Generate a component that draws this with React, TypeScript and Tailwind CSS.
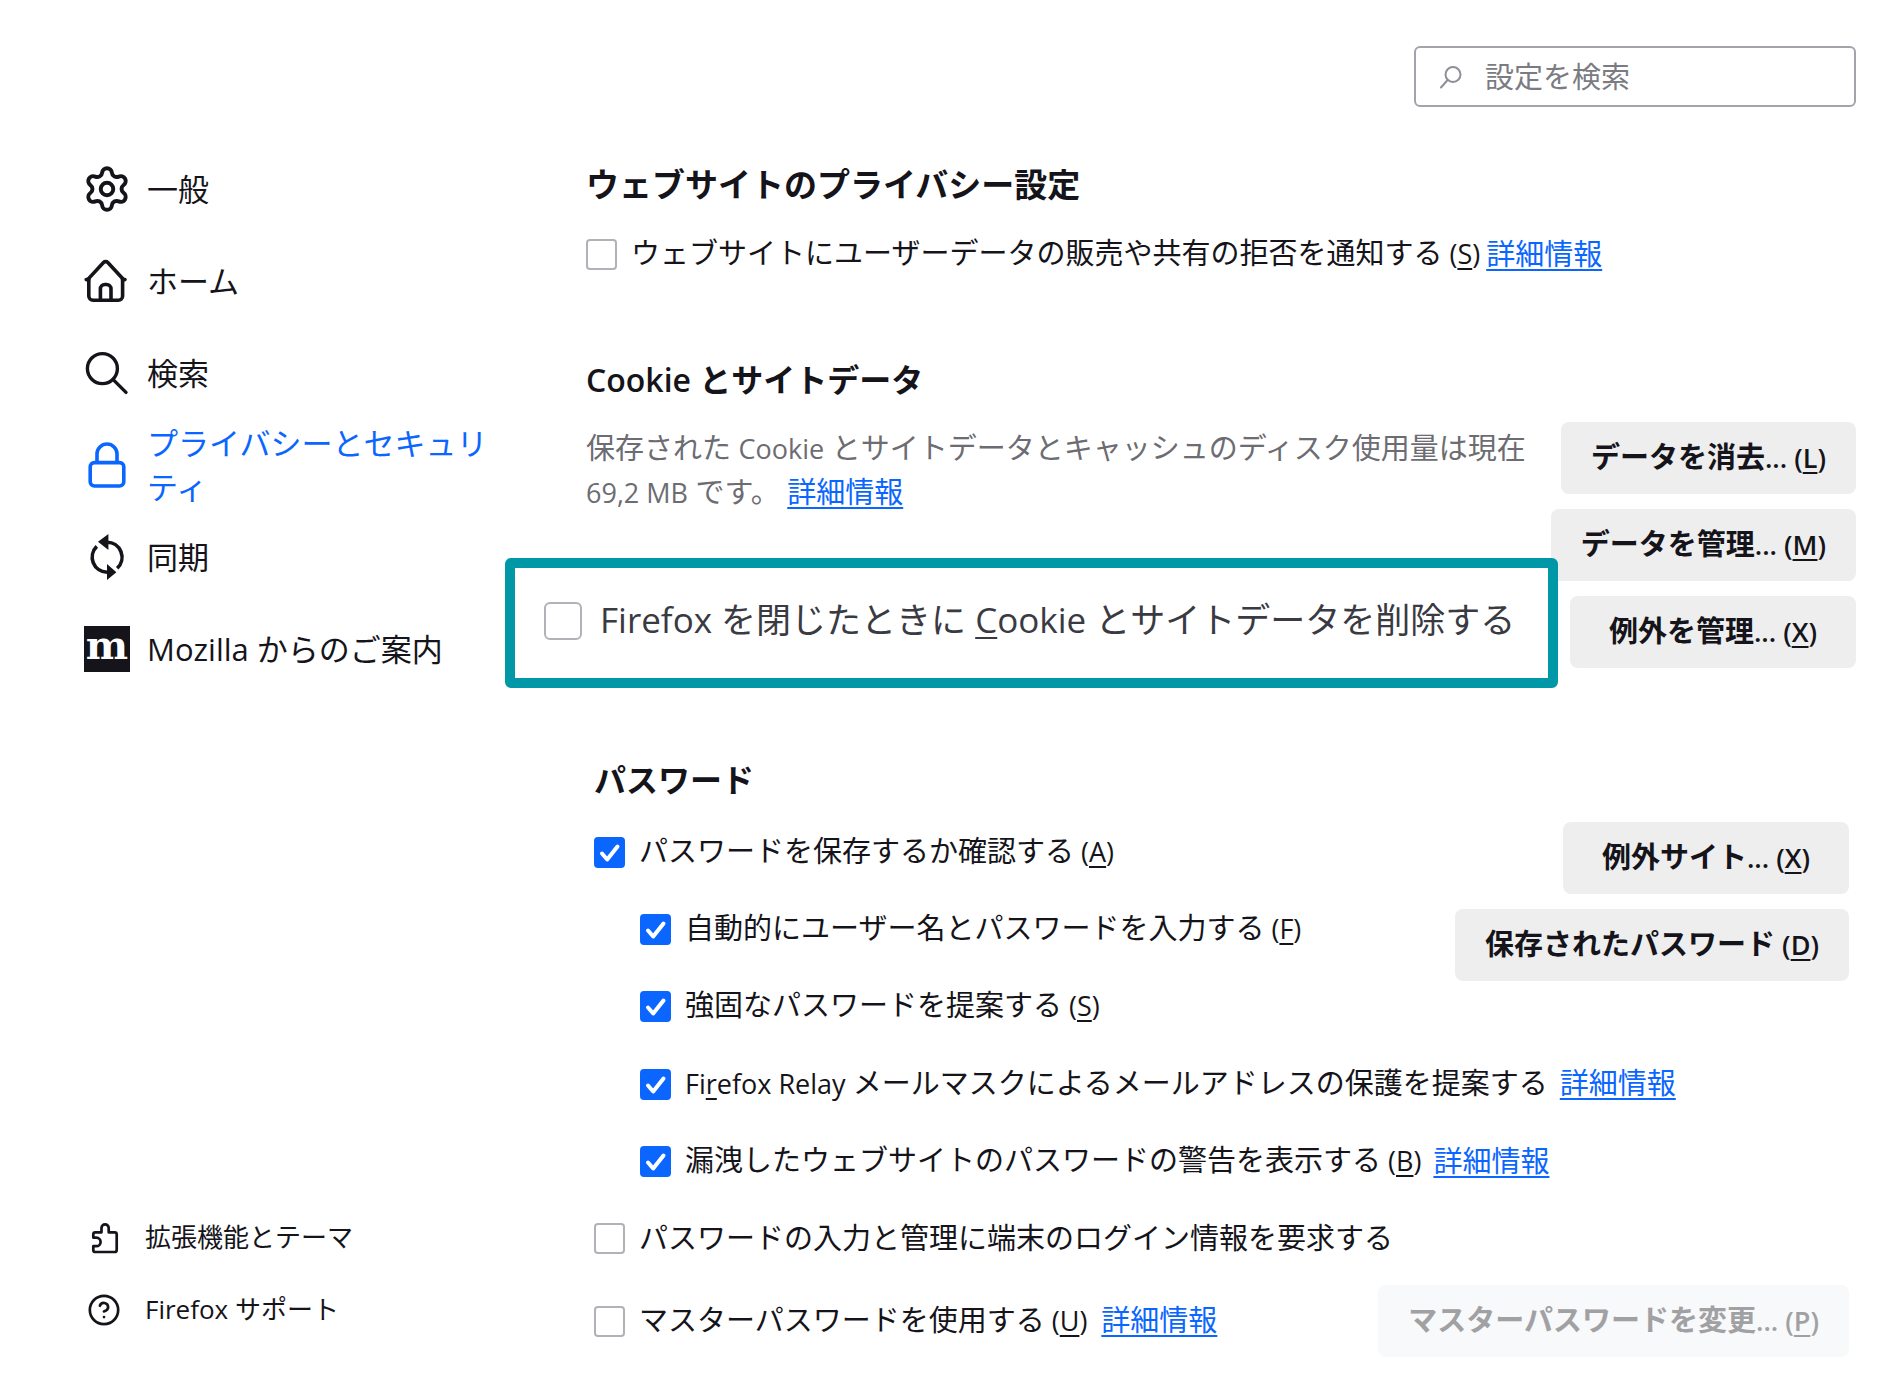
import React from 'react';
import { CircleHelp, Settings } from 'lucide-react';

type IconProps = { className?: string };

const HomeIcon: React.FC<IconProps> = ({ className }) => (
  <svg viewBox="0 0 46 46" fill="none" stroke="currentColor" strokeWidth="3.6" strokeLinecap="round" strokeLinejoin="round" className={className}>
    <path d="M2.2 21.6h2.6M38.4 21.6H41M4.8 20.4 19.5 4.5a3 3 0 0 1 4.3 0l14.8 15.9" />
    <path d="M4.8 20.5V38a4.3 4.3 0 0 0 4.3 4.3h25.2a4.3 4.3 0 0 0 4.3-4.3V20.5" />
    <path d="M16.4 42V31a4.5 4.5 0 0 1 4.5-4.5h1.6A4.5 4.5 0 0 1 27 31v11" />
  </svg>
);

const SearchIcon: React.FC<IconProps> = ({ className }) => (
  <svg viewBox="0 0 46 46" fill="none" stroke="currentColor" strokeWidth="3.4" strokeLinecap="round" className={className}>
    <circle cx="18.4" cy="18.6" r="15" />
    <path d="M29.2 29.6 42 42.4" />
  </svg>
);

const LockIcon: React.FC<IconProps> = ({ className }) => (
  <svg viewBox="0 0 46 46" fill="none" stroke="currentColor" strokeWidth="3.6" className={className}>
    <rect x="6.2" y="20.6" width="33.6" height="23.4" rx="4.2" />
    <path d="M13 20.6V12a10 10 0 0 1 20 0v8.6" />
  </svg>
);

const SyncIcon: React.FC<IconProps> = ({ className }) => (
  <svg viewBox="0 0 46 46" fill="none" stroke="currentColor" strokeWidth="3.6" className={className}>
    <path d="M23 8.2A15 15 0 0 1 33.2 34.2M12.8 12.4A15 15 0 0 0 23 38.2" />
    <path d="M24.4 0v16L14 7.8zM23 30v16l9.4-7.8z" fill="currentColor" stroke="none" />
  </svg>
);

const MozillaIcon: React.FC = () => (
  <span className="flex h-[46px] w-[46px] items-center justify-center bg-[#15141a] pb-2 font-['DejaVu_Serif',serif] text-[40px] leading-[38px] font-bold text-white">
    m
  </span>
);

const ExtensionIcon: React.FC<IconProps> = ({ className }) => (
  <svg viewBox="0 0 32 32" fill="none" stroke="currentColor" strokeWidth="2.7" strokeLinejoin="round" className={className}>
    <path d="M5.3 15.6v-3.3a2 2 0 0 1 2-2h6.2V6a3.6 3.6 0 0 1 7.2 0v4.3h6a2 2 0 0 1 2 2V28a2 2 0 0 1-2 2H7.3a2 2 0 0 1-2-2v-3.8h3a4.3 4.3 0 0 0 0-8.6z" />
  </svg>
);

const navItems = [
  { label: '一般', icon: <Settings className="h-[50px] w-[50px] shrink-0" strokeWidth={1.9} /> },
  { label: 'ホーム', icon: <HomeIcon className="h-[46px] w-[46px]" /> },
  { label: '検索', icon: <SearchIcon className="h-[46px] w-[46px]" /> },
  { label: 'プライバシーとセキュリティ', icon: <LockIcon className="h-[46px] w-[46px]" />, active: true },
  { label: '同期', icon: <SyncIcon className="h-[46px] w-[46px]" /> },
  { label: 'Mozilla からのご案内', icon: <MozillaIcon /> }
];

const footerItems = [
  { label: '拡張機能とテーマ', icon: <ExtensionIcon className="h-8 w-8" /> },
  { label: 'Firefox サポート', icon: <CircleHelp className="h-[34px] w-[34px] shrink-0" strokeWidth={1.9} /> }
];

// Latin runs are set a little smaller than the Japanese around them
const Latin: React.FC<{ children: React.ReactNode }> = ({ children }) => (
  <span className="text-[27px]">{children}</span>
);

const Key: React.FC<{ k: string }> = ({ k }) => (
  <Latin>
    {' '}(<u className="decoration-2 underline-offset-4">{k}</u>)
  </Latin>
);

const MoreLink: React.FC = () => (
  <a href="#more" className="pb-0.5 text-[#0a66ff] underline decoration-2 underline-offset-4">詳細情報</a>
);

type CheckProps = {
  id: string;
  checked?: boolean;
  large?: boolean;
  children: React.ReactNode;
};

const Check: React.FC<CheckProps> = ({ id, checked, large, children }) => (
  <div className={large ? 'flex items-center gap-[18px]' : 'flex items-center gap-3.5'}>
    <span className="relative flex shrink-0">
      <input
        id={id}
        type="checkbox"
        defaultChecked={checked}
        className={`peer appearance-none border-2 border-[#b1b1b7] bg-white checked:border-[#0a66ff] checked:bg-[#0a66ff] ${
          large ? 'h-[38px] w-[38px] rounded-md' : 'h-[31px] w-[31px] rounded'
        }`}
      />
      <svg
        viewBox="0 0 31 31"
        fill="none"
        stroke="white"
        strokeWidth="4"
        strokeLinecap="round"
        strokeLinejoin="round"
        className="pointer-events-none absolute inset-0 hidden peer-checked:block"
      >
        <path d="m8 16.5 5.2 6L23.5 9.5" />
      </svg>
    </span>
    <label htmlFor={id} className="pb-0.5 whitespace-nowrap">{children}</label>
  </div>
);

const ActionButton: React.FC<{ label: string; k: string; dots?: boolean; disabled?: boolean }> = ({ label, k, dots, disabled }) => (
  <button
    disabled={disabled}
    className="h-[72px] min-w-[286px] rounded-lg bg-[#eeeeee] px-[30px] pb-0.5 font-semibold whitespace-nowrap disabled:bg-[#f8f9fb] disabled:text-[#a1a1a3]"
  >
    {label}
    {dots && <Latin>...</Latin>}
    <Key k={k} />
  </button>
);

const App: React.FC = () => {
  return (
    <div className="flex min-h-screen flex-col bg-white font-['Open_Sans','Noto_Sans_CJK_JP',sans-serif] text-[29px] leading-[44px] text-[#15141a]">
      <header className="flex justify-end pt-[46px] pr-[42px]">
        <div className="flex h-[61px] w-[442px] items-center gap-[22px] rounded-md border-2 border-[#a3a3aa] pl-[23px]">
          <svg viewBox="0 0 24 24" fill="none" stroke="#8f8f98" strokeWidth="2" strokeLinecap="round" className="h-6 w-6 shrink-0">
            <circle cx="14" cy="9.5" r="7.5" />
            <path d="M8.6 15 2 22.5" />
          </svg>
          <input
            type="search"
            aria-label="設定を検索"
            placeholder="設定を検索"
            className="w-full min-w-0 bg-transparent outline-none placeholder:text-[#7b7b82]"
          />
        </div>
      </header>

      <div className="flex flex-1 pt-9">
        <aside className="flex w-[505px] shrink-0 flex-col justify-between pb-10 pl-[84px] text-[31px]">
          <nav>
            {navItems.map((item) => (
              <a
                key={item.label}
                href="#category"
                className={`flex h-[92px] items-center gap-[17px] ${item.active ? 'text-[#0a66ff]' : ''}`}
              >
                <span className="flex w-[46px] shrink-0 justify-center">{item.icon}</span>
                <span>{item.label}</span>
              </a>
            ))}
          </nav>
          <div className="text-[26px]">
            {footerItems.map((item) => (
              <a key={item.label} href="#footer" className="flex h-[72px] items-center gap-[22px]">
                <span className="flex w-[39px] shrink-0 justify-center">{item.icon}</span>
                <span className="pb-0.5">{item.label}</span>
              </a>
            ))}
          </div>
        </aside>

        <main className="min-w-0 flex-1 pt-5 pr-[42px] pb-7 pl-[81px]">
          <section>
            <h2 className="text-[33px] font-semibold">ウェブサイトのプライバシー設定</h2>
            <div className="mt-6 flex items-center gap-1.5">
              <Check id="gpc">
                ウェブサイトにユーザーデータの販売や共有の拒否を通知する
                <Key k="S" />
              </Check>
              <MoreLink />
            </div>
          </section>

          <section className="relative mt-20">
            <h2 className="text-[32px] font-semibold">Cookie とサイトデータ</h2>
            <div className="mt-5 flex items-start justify-between">
              <p className="w-[950px] pt-1 leading-[43px] text-[#6c6c72]">
                保存された <Latin>Cookie</Latin> とサイトデータとキャッシュのディスク使用量は現在{' '}
                <Latin>69,2 MB</Latin> です。 <MoreLink />
              </p>
              <div className="flex shrink-0 flex-col items-end gap-[15px]">
                <ActionButton label="データを消去" dots k="L" />
                <ActionButton label="データを管理" dots k="M" />
                <ActionButton label="例外を管理" dots k="X" />
              </div>
            </div>
            {/* callout laid over the row it enlarges */}
            <div className="absolute top-[200px] right-[298px] -left-[81px] flex h-[130px] items-center rounded-md border-10 border-[#0097a7] bg-white pb-1 pl-[29px] text-[35px] text-[#3a3a42]">
              <Check id="delete-on-close" large>
                Firefox を閉じたときに <u className="decoration-2 underline-offset-4">C</u>ookie とサイトデータを削除する
              </Check>
            </div>
          </section>

          <section className="mt-[90px] pr-[7px] pl-2">
            <h2 className="text-[32px] font-semibold">パスワード</h2>
            <div className="mt-3 flex items-start justify-between">
              <ul>
                <li className="flex h-[77px] items-center">
                  <Check id="save" checked>パスワードを保存するか確認する<Key k="A" /></Check>
                </li>
                <li className="flex h-[77px] items-center pl-[46px]">
                  <Check id="autofill" checked>自動的にユーザー名とパスワードを入力する<Key k="F" /></Check>
                </li>
                <li className="flex h-[77px] items-center pl-[46px]">
                  <Check id="suggest" checked>強固なパスワードを提案する<Key k="S" /></Check>
                </li>
              </ul>
              <div className="flex flex-col items-end gap-[15px] pt-2">
                <ActionButton label="例外サイト" dots k="X" />
                <ActionButton label="保存されたパスワード" k="D" />
              </div>
            </div>
            <ul>
              <li className="flex h-[78px] items-center gap-3 pl-[46px]">
                <Check id="relay" checked>
                  <Latin>Fi<u className="decoration-2 underline-offset-4">r</u>efox Relay </Latin>
                  メールマスクによるメールアドレスの保護を提案する
                </Check>
                <MoreLink />
              </li>
              <li className="flex h-[77px] items-center gap-3 pl-[46px]">
                <Check id="breach" checked>漏洩したウェブサイトのパスワードの警告を表示する<Key k="B" /></Check>
                <MoreLink />
              </li>
              <li className="flex h-[77px] items-center">
                <Check id="os-auth">パスワードの入力と管理に端末のログイン情報を要求する</Check>
              </li>
            </ul>
            <div className="mt-2 flex items-center justify-between">
              <div className="flex items-center gap-3.5">
                <Check id="master">マスターパスワードを使用する<Key k="U" /></Check>
                <MoreLink />
              </div>
              <ActionButton label="マスターパスワードを変更" dots k="P" disabled />
            </div>
          </section>
        </main>
      </div>
    </div>
  );
};

export default App;
